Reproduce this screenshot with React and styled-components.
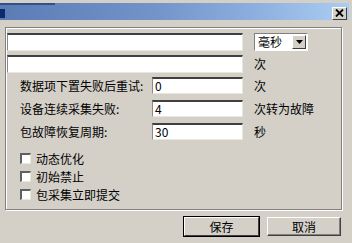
import React from "react";
import styled, { createGlobalStyle } from "styled-components";

const Global = createGlobalStyle`
  html, body { margin: 0; padding: 0; background: #d4d0c8; }
  body { font-family: "Noto Sans CJK SC", "Liberation Sans", sans-serif; font-size: 12px; color: #000; }
`;

const Window = styled.div`
  width: 352px;
  height: 243px;
  box-sizing: border-box;
  background: #d4d0c8;
  padding-top: 3px;
  display: flex;
  flex-direction: column;
  overflow: hidden;
`;

const TitleBar = styled.div`
  flex: 0 0 17px;
  height: 17px;
  width: 349px;
  background-color: #7393c9;
  background-image:
    linear-gradient(#34508c, #34508c),
    linear-gradient(to right, #5b7bb5 0%, #7394c9 45%, #8fb1e0 75%, #aacdf2 100%);
  background-size: 55px 2px, 100% 100%;
  background-repeat: no-repeat;
  display: flex;
  align-items: center;
  justify-content: space-between;
`;

const TitleIcon = styled.div`
  width: 5px;
  height: 9px;
  margin-top: 3px;
  background: #0c2a6e;
`;

const CloseButton = styled.div`
  width: 15px;
  height: 13px;
  margin-right: 2px;
  margin-top: 3px;
  box-sizing: border-box;
  background: #d4d0c8;
  border: 1px solid;
  border-color: #fff #404040 #404040 #fff;
  display: flex;
  align-items: center;
  justify-content: center;
`;

const GroupBox = styled.div`
  flex: none;
  margin: 7px 0 0 5px;
  width: 337px;
  height: 183px;
  box-sizing: border-box;
  border: 1px solid #808080;
  box-shadow: inset 1px 1px 0 #fff, 1px 1px 0 #fff;
  padding: 5px 0 0 1px;
  display: flex;
  flex-direction: column;
`;

const Row = styled.div`
  display: flex;
  align-items: center;
  margin-top: ${(p) => p.$mt || 0}px;
  height: ${(p) => p.$h || 18}px;
`;

const Field = styled.div`
  width: 236px;
  display: flex;
  align-items: center;
  height: 100%;
`;

const Label = styled.span`
  width: 132px;
  padding-left: 13px;
  white-space: nowrap;
  line-height: 14px;
`;

const Input = styled.div`
  flex: 1;
  height: 100%;
  box-sizing: border-box;
  background: #fff;
  border-top: 2px solid #404040;
  border-left: 1px solid #8a8a8a;
  border-bottom: 1px solid #e8e6e0;
  border-right: 1px solid #e8e6e0;
  padding-left: 2px;
  display: flex;
  align-items: center;
  line-height: 12px;
  font-size: 12px;
`;

const Unit = styled.span`
  margin-left: 11px;
  white-space: nowrap;
  line-height: 14px;
`;

const Combo = styled.div`
  margin-left: 11px;
  width: 54px;
  height: 18px;
  margin-top: -1px;
  box-sizing: border-box;
  background: #fff;
  border: 1px solid;
  border-color: #808080 #fff #fff #808080;
  display: flex;
  align-items: center;
  justify-content: space-between;
  padding: 1px 1px 1px 3px;
`;

const ComboButton = styled.div`
  width: 14px;
  height: 14px;
  box-sizing: border-box;
  background: #d4d0c8;
  border: 1px solid;
  border-color: #fff #404040 #404040 #fff;
  display: flex;
  align-items: center;
  justify-content: center;
`;

const CheckList = styled.div`
  display: flex;
  flex-direction: column;
  margin-top: 12px;
  padding-left: 13px;
  gap: 6px;
`;

const CheckRow = styled.div`
  display: flex;
  align-items: center;
  height: 12px;
  gap: 5px;
`;

const Box = styled.div`
  width: 11px;
  height: 11px;
  box-sizing: border-box;
  background: #fff;
  border-top: 2px solid #606060;
  border-left: 2px solid #606060;
  border-right: 1px solid #e8e6e0;
  border-bottom: 1px solid #e8e6e0;
`;

const Buttons = styled.div`
  flex: none;
  display: flex;
  gap: 8px;
  margin: 7px 0 0 184px;
`;

const Button = styled.div`
  width: ${(p) => p.$w}px;
  height: 19px;
  box-sizing: border-box;
  background: #d4d0c8;
  border: 1px solid;
  border-color: #fff #404040 #404040 #fff;
  box-shadow: ${(p) => (p.$default ? "0 0 0 1px #000" : "inset -1px -1px 0 #808080")};
  display: flex;
  align-items: center;
  justify-content: center;
  line-height: 14px;
`;

export default function App() {
  return (
    <>
      <Global />
      <Window>
        <TitleBar>
          <TitleIcon />
          <CloseButton>
            <svg width="9" height="8" viewBox="0 0 9 8">
              <path d="M1 0.5 L8 7.5 M8 0.5 L1 7.5" stroke="#000" strokeWidth="1.8" />
            </svg>
          </CloseButton>
        </TitleBar>
        <GroupBox>
          <Row $h={18}>
            <Field>
              <Input />
            </Field>
            <Combo>
              <span>毫秒</span>
              <ComboButton>
                <svg width="7" height="4" viewBox="0 0 7 4">
                  <path d="M0 0 H7 L3.5 4 Z" fill="#000" />
                </svg>
              </ComboButton>
            </Combo>
          </Row>
          <Row $mt={4} $h={18}>
            <Field>
              <Input />
            </Field>
            <Unit>次</Unit>
          </Row>
          <Row $mt={4} $h={17}>
            <Field>
              <Label>数据项下置失败后重试:</Label>
              <Input>0</Input>
            </Field>
            <Unit>次</Unit>
          </Row>
          <Row $mt={6} $h={17}>
            <Field>
              <Label>设备连续采集失败:</Label>
              <Input>4</Input>
            </Field>
            <Unit>次转为故障</Unit>
          </Row>
          <Row $mt={6} $h={17}>
            <Field>
              <Label>包故障恢复周期:</Label>
              <Input>30</Input>
            </Field>
            <Unit>秒</Unit>
          </Row>
          <CheckList>
            <CheckRow>
              <Box />
              <span>动态优化</span>
            </CheckRow>
            <CheckRow>
              <Box />
              <span>初始禁止</span>
            </CheckRow>
            <CheckRow>
              <Box />
              <span>包采集立即提交</span>
            </CheckRow>
          </CheckList>
        </GroupBox>
        <Buttons>
          <Button $w={75} $default>保存</Button>
          <Button $w={74}>取消</Button>
        </Buttons>
      </Window>
    </>
  );
}
